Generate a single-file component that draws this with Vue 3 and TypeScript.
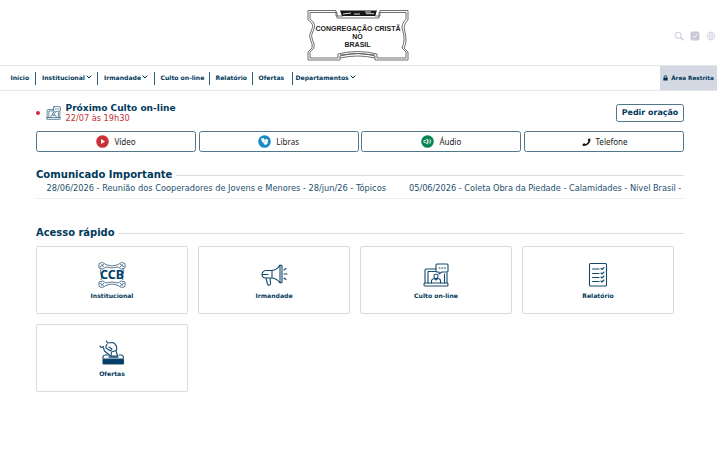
<template>
  <div class="page">
    <header class="top">
      <svg class="brand" viewBox="0 0 102 52" role="img" aria-label="Congregação Cristã no Brasil">
        <g fill="none" stroke="#555" stroke-width=".85">
          <path d="M1 1.500H29V7H36V4H68V7H73V1.500H101V11Q96 16 97.500 21T99 31T97 39L101 43V51H68V47Q51 42 33 47V51H1V43L5 39Q6 35 3.500 31T4.500 21T1 11Z" />
          <path d="M3 3.500H30V9H72V3.500H99V10Q93.500 16 95.500 21T97 31T95 39L99 43V49H70V45Q51 40 31 45V49H3V43L7 39Q8 35 5.500 31T6.500 21T3 10Z" />
          <path d="M33 46Q51 43 68 46M33 49Q51 45 68 49" />
        </g>
        <path d="M33 1.500H70L68 7H35Z" fill="#161616" />
        <path d="M36 5L44 4M47 5H53M58 3H64M59 4.700H67" stroke="#eee" stroke-width=".9" fill="none" />
        <g class="brand-text" text-anchor="middle">
          <text x="51" y="21.500" textLength="85">CONGREGAÇÃO CRISTÃ</text>
          <text x="50.500" y="29.500">NO</text>
          <text x="50.500" y="37.500" textLength="26">BRASIL</text>
        </g>
      </svg>
      <div class="tools">
        <svg viewBox="0 0 10 10"><circle cx="4.200" cy="4.200" r="3" /><path d="M6.500 6.500L9.300 9.300" stroke-width="1.500" /></svg>
        <svg viewBox="0 0 10 10"><rect x="1" y="1" width="8" height="8" rx="1" fill="#c9c9d9" /><path class="tick" d="M3 5L4.500 6.500L7.500 3.300" /></svg>
        <svg viewBox="0 0 10 10" class="globe"><circle cx="5" cy="5" r="4" /><ellipse cx="5" cy="5" rx="1.800" ry="4" /><path d="M1 5H9M5 1V9" /></svg>
      </div>
    </header>

    <nav class="menu">
      <a v-for="item in menu" :key="item.label" class="menu-item" href="#">
        {{ item.label }}
        <svg v-if="item.submenu" class="chevron" viewBox="0 0 6 4"><path d="M.6 .6L3 3L5.400 .6" /></svg>
      </a>
      <a class="restricted" href="#">
        <svg viewBox="0 0 6 7"><path d="M1.500 3V2a1.500 1.500 0 0 1 3 0v1" fill="none" stroke="#003352" /><rect x=".4" y="2.900" width="5.200" height="3.700" rx=".5" fill="#003352" /></svg>
        Área Restrita
      </a>
    </nav>

    <main class="content">
      <section class="service">
        <span class="live-dot"></span>
        <svg class="service-icon" viewBox="0 0 26 24"><use href="#laptop" /></svg>
        <div class="service-info">
          <h2>Próximo Culto on-line</h2>
          <p>22/07 às 19h30</p>
        </div>
        <button class="prayer">Pedir oração</button>
      </section>

      <div class="channels">
        <button v-for="channel in channels" :key="channel.name" class="channel">
          <svg viewBox="0 0 13 13" :class="channel.icon">
            <circle v-if="channel.icon !== 'phone'" cx="6.500" cy="6.500" r="6.300" :fill="channel.color" />
            <path v-if="channel.icon === 'video'" d="M5.100 4L9 6.500L5.100 9Z" fill="#fff" />
            <g v-else-if="channel.icon === 'libras'" fill="#fff">
              <path d="M3 3.200L4 3L4.700 4.500L5 3L6 3.200L6.400 4.800L7.800 5L8 7.500L6 8.200L4 6.800Z" />
              <path d="M6.500 4.500L9.500 4L10 6L9.300 9L7 10L5.300 8.300L7.500 7.900Z" />
              <path d="M6.300 5.800L7.800 7" stroke="#168bc4" stroke-width=".5" />
            </g>
            <g v-else-if="channel.icon === 'audio'" fill="none" stroke="#fff" stroke-width=".8">
              <path d="M3 5.400H4.500L6.400 4V9L4.500 7.600H3Z" />
              <path d="M7.500 5.200Q8.500 6.500 7.500 7.800M8.800 4.200Q10.800 6.500 8.800 8.800" />
            </g>
            <path v-else d="M9.400 2.600L11.400 3.100Q11.600 6.500 9.200 8.800T3.300 10.800L2.700 8.800L4.900 7.900L5.900 8.900Q8.300 7.800 9.200 5.600L8.300 4.700Z" fill="#111" />
          </svg>
          {{ channel.name }}
        </button>
      </div>

      <h2 class="heading notice-heading">Comunicado Importante</h2>
      <div class="notices">
        <span v-for="notice in notices" :key="notice">{{ notice }}</span>
      </div>

      <h2 class="heading quick-heading">Acesso rápido</h2>
      <div class="cards">
        <a class="card" href="#">
          <svg class="card-icon" viewBox="0 0 28 26">
            <g fill="none" stroke="#315c78" stroke-width=".8">
              <path d="M1 1.500Q5-1 7 2L9 3Q14 5 19 3L21 2Q23-1 27 1.500V6L23 7L20 5Q14 7 8 5L5 7L1 6ZM3 2.500L6 5M25 2.500L22 5M2 5L6 2M26 5L22 2" />
              <path d="M1 24.500Q5 27 7 24L9 23Q14 21 19 23L21 24Q23 27 27 24.500V20L23 19L20 21Q14 19 8 21L5 19L1 20ZM3 23.500L6 21M25 23.500L22 21M2 21L6 24M26 21L22 24" />
              <path d="M3 7Q1.500 10 3 12T3 18M25 7Q26.500 10 25 12T25 18" />
            </g>
            <text class="ccb" x="14" y="17.300" text-anchor="middle" textLength="24">CCB</text>
          </svg>
          Institucional
        </a>
        <a class="card" href="#">
          <svg class="card-icon line" viewBox="0 0 28 26">
            <path d="M3 10Q4 8.500 6 8.500H12Q17 8 20 3V21Q17 16.500 12 16H6Q2 16 2 12.500Q2 11 3 10ZM12 8.500V16M2.500 12.500H8M6 16L7.500 22Q8 23.500 10 23Q11 22.600 10.500 20.500L10 16M20 3L22 3.500V20.500L20 21M24 8L26 6.500M24 12H27M24 16L26 17.500" />
          </svg>
          Irmandade
        </a>
        <a class="card" href="#">
          <svg class="card-icon small" viewBox="0 0 26 24">
            <g id="laptop" class="line">
              <path d="M13 6H3.500Q2 6 2 7.500V20M24 10V20M5 20V8.500H12.500M21.500 11V20" />
              <rect x="1" y="20" width="24" height="3" rx="1" />
              <path d="M14 1H24Q25 1 25 2V8Q25 9 24 9H19L16 11V9H14Q13 9 13 8V2Q13 1 14 1Z" />
              <path d="M16 5H17M18.700 5H19.700M21.500 5H22.500" />
              <path d="M8.500 20V17.500Q9 15.800 11.500 15.500L13 17L14.500 15.500Q17.500 15.800 17.500 17.500V20M13 11.300Q15 11.300 15 13.300T13 15.500T11 13.300T13 11.300" />
            </g>
          </svg>
          Culto on-line
        </a>
        <a class="card" href="#">
          <svg class="card-icon line" viewBox="0 0 28 26">
            <rect x="5.500" y="1.500" width="17" height="22.500" rx="1" />
            <path d="M8.500 7H15M8.500 11.500H15M8.500 15.500H15M8.500 19.500H15M17 6.500L18 7.500L20 5.500M17 11L18 12L20 10M17 15L18 16L20 14M17 19L18 20L20 18" />
          </svg>
          Relatório
        </a>
        <a class="card" href="#">
          <svg class="card-icon line" viewBox="0 0 28 26">
            <path d="M5 18.500V17Q5 15 7.500 15H10M21 15H23Q25.500 15 25.500 18" />
            <rect x="5" y="19" width="20.500" height="5" rx=".5" fill="#003e69" />
            <path d="M2 6Q3 8.500 5.500 6.500M8.500 1L9.500 3L15 2.500Q19.500 5 18.500 10M5.500 8L6.500 11L12 15.500M9 4.500Q7.500 5.500 8 8L12.500 11L14 9L11 7M13.500 12L18 10.500L19.500 16H13Z" />
            <path d="M11 17H20" stroke-width="1.400" />
          </svg>
          Ofertas
        </a>
      </div>
    </main>
  </div>
</template>

<script setup lang="ts">
interface MenuItem {
  label: string;
  submenu?: boolean;
}

interface Channel {
  name: string;
  icon: 'video' | 'libras' | 'audio' | 'phone';
  color?: string;
}

const menu: MenuItem[] = [
  { label: 'Início' },
  { label: 'Institucional', submenu: true },
  { label: 'Irmandade', submenu: true },
  { label: 'Culto on-line' },
  { label: 'Relatório' },
  { label: 'Ofertas' },
  { label: 'Departamentos', submenu: true },
];

const channels: Channel[] = [
  { name: 'Vídeo', icon: 'video', color: '#c93038' },
  { name: 'Libras', icon: 'libras', color: '#168bc4' },
  { name: 'Áudio', icon: 'audio', color: '#078553' },
  { name: 'Telefone', icon: 'phone' },
];

const notices = [
  '28/06/2026 - Reunião dos Cooperadores de Jovens e Menores - 28/jun/26 - Tópicos',
  '05/06/2026 - Coleta Obra da Piedade - Calamidades - Nível Brasil -',
];
</script>

<style>
body {
  background: #fff;
}
</style>

<style scoped>
.page {
  width: 720px;
  height: 450px;
  overflow: hidden;
  color: #00395b;
  font-family: "DejaVu Sans", Verdana, sans-serif;
}

.page * {
  box-sizing: border-box;
}

a {
  color: inherit;
  text-decoration: none;
}

h2,
p {
  margin: 0;
}

.top {
  display: grid;
  grid-template-columns: 307px 102px 1fr;
  width: 717px;
  height: 66px;
  border-bottom: 1.5px solid #e6e7ea;
}

.brand {
  grid-column: 2;
  width: 102px;
  height: 52px;
  margin-top: 9px;
}

.brand-text {
  font-family: "Liberation Sans", Arial, sans-serif;
  font-size: 7px;
  font-weight: bold;
  fill: #222;
}

.tools {
  display: flex;
  justify-content: flex-end;
  gap: 6px;
  padding: 31px 1px 0 0;
}

.tools svg {
  width: 10px;
  height: 10px;
  fill: none;
  stroke: #c9c9d9;
}

.tools .tick {
  stroke: #fff;
}

.tools .globe {
  stroke-width: .6;
}

.menu {
  display: grid;
  grid-template-columns: 36px 62px 56.5px 55px 43px 40px 1fr 57px;
  align-items: center;
  width: 717px;
  height: 25px;
  border-bottom: 1.5px solid #e6e7ea;
  font-size: 6.1px;
  font-weight: bold;
}

.menu-item {
  display: flex;
  align-items: center;
  height: 13px;
  padding: 0 0 2px 6px;
  border-right: 1.5px solid #315c78;
  white-space: nowrap;
}

.menu-item:first-child {
  padding-left: 10.5px;
}

.menu-item:nth-child(7) {
  padding-left: 3px;
  border-right: 0;
}

.chevron {
  width: 6px;
  height: 4px;
  margin-left: 1px;
  fill: none;
  stroke: #003352;
}

.restricted {
  display: flex;
  align-items: center;
  justify-content: center;
  gap: 3px;
  height: 24px;
  background: #d4d8e2;
  font-size: 5.7px;
  white-space: nowrap;
}

.restricted svg {
  width: 5px;
  height: 6px;
}

.content {
  width: 648px;
  margin-left: 36px;
}

.service {
  display: flex;
  align-items: center;
  height: 40px;
  padding-top: 3px;
}

.live-dot {
  width: 4px;
  height: 4px;
  border-radius: 50%;
  background: #d12d36;
}

.service-icon {
  width: 15px;
  height: 14px;
  margin: 0 4.5px 0 6px;
}

.service-info {
  flex: 1;
  padding-top: 1px;
}

.service-info h2 {
  font-size: 9.05px;
  line-height: 11px;
}

.service-info p {
  color: #c5303b;
  font-size: 8.2px;
  line-height: 9px;
}

.prayer,
.channel {
  border: 1px solid #52768b;
  border-radius: 2.5px;
  background: #fff;
}

.prayer {
  width: 68px;
  height: 18px;
  padding: 0;
  color: #00395b;
  font-family: inherit;
  font-size: 7.95px;
  font-weight: bold;
}

.channels {
  display: grid;
  grid-template-columns: repeat(4, 1fr);
  gap: 2.7px;
  height: 21px;
}

.channel {
  display: flex;
  align-items: center;
  justify-content: center;
  gap: 5px;
  padding: 0;
  color: #222;
  font-family: "Noto Sans", sans-serif;
  font-size: 8px;
  line-height: 10px;
}

.channel svg {
  width: 13px;
  height: 13px;
}

.channel .phone {
  width: 12px;
  height: 12px;
  margin-right: -2px;
}

.heading {
  display: flex;
  align-items: center;
  gap: 4px;
  height: 12px;
  font-size: 10.05px;
  line-height: 12px;
}

.heading::after {
  flex: 1;
  height: 1px;
  background: #d8dce5;
  content: "";
}

.notice-heading {
  margin-top: 17px;
}

.notices {
  display: flex;
  gap: 23px;
  height: 18px;
  padding: 2px 0 0 10.5px;
  border-bottom: 1px solid #eceef1;
  color: #244f6b;
  font-size: 8.24px;
  line-height: 11px;
  white-space: nowrap;
}

.notices span:last-child {
  letter-spacing: -.035px;
}

.quick-heading {
  margin-top: 28px;
  font-size: 9.95px;
}

.cards {
  display: grid;
  grid-template-columns: repeat(4, 152px);
  gap: 10px;
  margin-top: 7px;
}

.card {
  display: flex;
  flex-direction: column;
  align-items: center;
  height: 68px;
  padding-top: 14.5px;
  border: 1px solid #d8dae1;
  border-radius: 2px;
  font-size: 6.1px;
  font-weight: bold;
  line-height: 10px;
}

.card-icon {
  width: 28px;
  height: 26px;
  margin-bottom: 3.5px;
}

.card-icon.small {
  width: 26px;
  height: 24px;
  margin: 1px 0 4.5px;
}

.line {
  fill: none;
  stroke: #164b6d;
  stroke-width: 1.1;
  stroke-linecap: round;
  stroke-linejoin: round;
}

.ccb {
  font-family: "Noto Sans", sans-serif;
  font-size: 12.5px;
  font-weight: bold;
  fill: #003e69;
}
</style>
